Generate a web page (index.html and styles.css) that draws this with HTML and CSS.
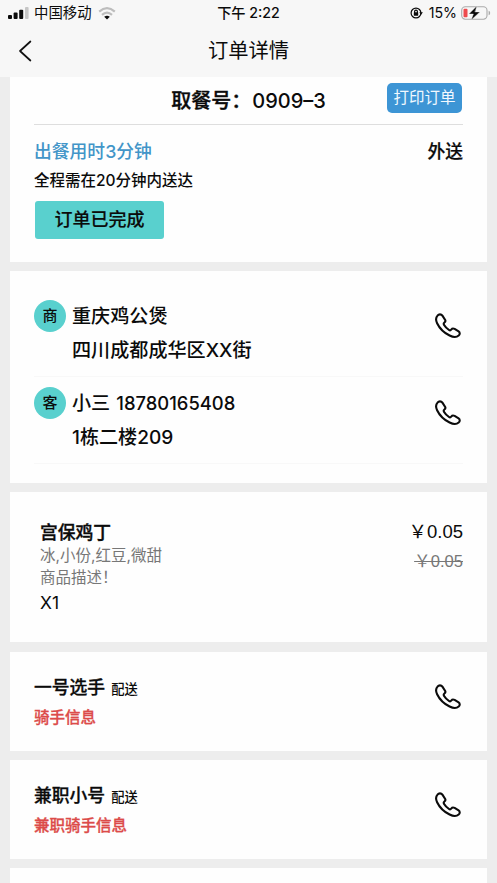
FILE: index.html
```html
<!DOCTYPE html>
<html lang="zh-CN">
<head>
<meta charset="utf-8">
<title>订单详情</title>
<link rel="stylesheet" href="styles.css">
</head>
<body>
<svg class="defs" aria-hidden="true">
  <symbol id="phone" viewBox="0 0 28 28">
    <path d="M3.5 3.6C4.8 2 7.2 2 8.4 3.6L11.2 8C11.7 9 11.3 9.8 10.4 10.5C9.5 11.2 9.5 12 10.1 13C11.3 15 13.1 16.7 15 18C15.9 18.6 16.6 18.5 17.3 17.5C18.1 16.4 19.4 16.3 20.6 16.9L24.6 19.4C26.2 20.5 26 22.4 24.7 23.5C22.4 25.5 19 25.2 15.6 23.5C10.1 20.8 5.6 16.4 3.1 11.2C1.7 8.3 1.9 5.4 3.5 3.6Z"/>
  </symbol>
</svg>
<header class="top">
  <div class="status">
    <div class="status-left">
      <svg class="signal" viewBox="0 0 21 12"><rect x="0" y="8" width="4" height="4" rx="1"/><rect x="5.6" y="5.6" width="4" height="6.4" rx="1"/><rect x="11.2" y="2.8" width="4" height="9.2" rx="1"/><rect class="dim" x="17" y="0" width="3.6" height="12" rx="1"/></svg>
      <span class="carrier">中国移动</span>
      <svg class="wifi" viewBox="0 0 18 13"><path d="M1.2 4.6Q9-2.2 16.8 4.6M4 7.8Q9 3.4 14 7.8"/><path class="dot" d="M6.2 9.8Q9 7.8 11.8 9.8L9 12.6Z"/></svg>
    </div>
    <div class="time">下午 2:22</div>
    <div class="status-right">
      <svg class="lock" viewBox="0 0 13 12"><circle cx="6" cy="6" r="4.9"/><path d="M4.6 5.5V4.6a1.4 1.4 0 0 1 2.8 0v.9"/><rect x="3.8" y="5.3" width="4.4" height="3.5" rx=".5"/><path class="tip" d="M9.3 5.2h3.6l-1.8 2.5Z"/></svg>
      <span class="pct">15%</span>
      <svg class="battery" viewBox="0 0 30 14"><rect class="case" x=".7" y=".8" width="25.3" height="12.4" rx="3.6"/><rect class="charge" x="2.5" y="2.7" width="4" height="8.6" rx="1"/><path class="nub" d="M27.6 4.8q1.6.5 1.6 2.2t-1.6 2.2Z"/><path class="bolt" d="M15.8 0 7.8 8h4.6L10.2 14 18.9 5.9h-4.7Z"/></svg>
    </div>
  </div>
  <nav class="nav">
    <svg class="back" viewBox="0 0 14 22"><path d="M12.4 1.5 2 11 12.4 20.5"/></svg>
    <h1 class="title">订单详情</h1>
  </nav>
</header>
<main class="cards">
  <section class="card order">
    <div class="order-head"><h2 class="pickup">取餐号：<span class="pickup-no">0909–3</span></h2><button class="print">打印订单</button></div>
    <div class="order-row"><span class="elapsed">出餐用时3分钟</span><span class="kind">外送</span></div>
    <p class="limit">全程需在20分钟内送达</p>
    <button class="done">订单已完成</button>
  </section>
  <section class="card contacts">
    <div class="contact">
      <span class="badge">商</span>
      <div class="lines"><div>重庆鸡公煲</div><div>四川成都成华区XX街</div></div>
      <svg class="phone"><use href="#phone"/></svg>
    </div>
    <div class="contact">
      <span class="badge">客</span>
      <div class="lines"><div>小三 <span class="digits">18780165408</span></div><div>1栋二楼209</div></div>
      <svg class="phone"><use href="#phone"/></svg>
    </div>
  </section>
  <section class="card product">
    <div class="info">
      <div class="dish">宫保鸡丁</div>
      <div class="desc">冰,小份,红豆,微甜</div>
      <div class="desc">商品描述！</div>
      <div class="qty">X1</div>
    </div>
    <div class="prices"><div class="price">￥0.05</div><div class="old">￥0.05</div></div>
  </section>
  <section class="card rider">
    <div><div class="rider-name">一号选手<small>配送</small></div><div class="rider-info">骑手信息</div></div>
    <svg class="phone"><use href="#phone"/></svg>
  </section>
  <section class="card rider">
    <div><div class="rider-name">兼职小号<small>配送</small></div><div class="rider-info">兼职骑手信息</div></div>
    <svg class="phone"><use href="#phone"/></svg>
  </section>
  <section class="card rest"></section>
</main>
</body>
</html>
```
FILE: styles.css
```css
* { box-sizing: border-box; margin: 0; padding: 0; }
html, body { height: 883px; overflow: hidden; }
body {
  display: flex; flex-direction: column;
  background: #ededed; color: #0b0b0b;
  font-family: Inter, "Noto Sans CJK SC", sans-serif;
  font-weight: 500;
}
svg { display: block; flex: none; fill: none; stroke-linecap: round; stroke-linejoin: round; }
button { border: 0; font: inherit; color: inherit; white-space: nowrap; }
.defs { position: absolute; width: 0; height: 0; }

.top { height: 77px; flex: none; background: #f7f7f7; }
.status { height: 26px; display: grid; grid-template-columns: 1fr auto 1fr; align-items: center; padding: 0 6px 0 8px; }
.status-left, .status-right { display: flex; align-items: center; }
.status-right { justify-content: flex-end; }
.signal { width: 21px; height: 12px; fill: #0b0b0b; }
.signal .dim { fill: #c6c6c6; }
.carrier { margin: 0 6px 0 5px; font-size: 14.4px; font-weight: 400; line-height: 26px; }
.wifi { width: 18px; height: 13px; stroke: #bdbdbd; stroke-width: 2.2; stroke-linecap: butt; }
.wifi .dot { fill: #0b0b0b; stroke: none; }
.time { font-size: 14.2px; line-height: 26px; padding-right: 2px; }
.lock { width: 13px; height: 12px; stroke: #0b0b0b; stroke-width: 1.2; }
.lock rect, .lock .tip { fill: #0b0b0b; stroke: none; }
.pct { margin: 0 4px 0 6px; font-size: 14.2px; font-weight: 400; line-height: 26px; }
.battery { width: 30px; height: 14px; }
.case { stroke: #aaa; stroke-width: 1.1; }
.charge { fill: #ee4b4e; }
.nub { fill: #aaa; }
.bolt { fill: #0b0b0b; stroke: #f7f7f7; stroke-width: .4; }
.nav { height: 49px; display: grid; grid-template-columns: 1fr auto 1fr; align-items: center; }
.back { width: 14px; height: 22px; margin-left: 18px; stroke: #111; stroke-width: 1.7; }
.title { font-size: 20.3px; font-weight: 400; line-height: 28px; }

.cards { display: flex; flex-direction: column; padding: 0 10px; }
.card { flex: none; background: #fefefe; margin-bottom: 9px; padding: 0 24px; }

.order { height: 185px; }
.order-head { height: 48px; border-bottom: 1px solid #dedede; display: grid; grid-template-columns: 1fr auto 1fr; align-items: center; }
.pickup { grid-column: 2; font-size: 20px; font-weight: 500; line-height: 28px; white-space: nowrap; -webkit-text-stroke: .35px; }
.pickup-no { margin-left: 1px; -webkit-text-stroke: 0; }
.print { justify-self: end; width: 75px; height: 30px; margin: 0 1px 6px 0; border-radius: 5px; background: #3d95d5; color: #f1f9ff; font-size: 15.5px; font-weight: 400; line-height: 30px; }
.order-row { height: 50px; display: flex; justify-content: space-between; align-items: center; font-size: 17.8px; }
.elapsed { color: #4295c8; }
.kind { -webkit-text-stroke: .2px; }
.limit { font-size: 15.5px; line-height: 22px; margin-top: -5px; }
.done { display: block; width: 129px; height: 38px; margin: 9px 0 0 1px; border-radius: 3px; background: #59d0ce; font-size: 18px; line-height: 38px; -webkit-text-stroke: .15px; }

.contacts { height: 212px; padding-top: 19px; }
.contact { height: 87px; display: flex; align-items: flex-start; border-bottom: 1px solid #f8f8f8; }
.badge { width: 32px; height: 32px; margin-top: 10px; border-radius: 50%; background: #59d0ce; font-size: 15px; line-height: 32px; text-align: center; }
.lines { flex: 1; margin: 9px 0 0 6px; font-size: 19.1px; line-height: 34px; }
.lines > div { height: 34px; white-space: nowrap; }
.digits { margin-left: 1px; font-size: 18.4px; }
.phone { width: 28px; height: 28px; stroke: #0b0b0b; stroke-width: 2.1; }
.contact .phone { margin: 22px 1px 0 0; }

.product { height: 150px; padding-left: 30px; display: flex; justify-content: space-between; margin-bottom: 10px; }
.info { padding-top: 29px; }
.dish { font-size: 17.8px; font-weight: 500; line-height: 24px; -webkit-text-stroke: .35px; }
.desc { font-size: 15.5px; font-weight: 400; line-height: 21.5px; color: #777; }
.qty { margin-top: 3px; font-size: 17.5px; font-weight: 400; line-height: 24px; }
.prices { padding-top: 28px; font-family: "Liberation Sans", "Noto Sans CJK SC", sans-serif; font-weight: 400; text-align: right; }
.price { font-size: 18.5px; line-height: 24px; }
.old { margin-top: 6px; font-size: 16.6px; line-height: 24px; color: #777; text-decoration: line-through; }

.rider { height: 99px; padding-top: 23px; display: flex; justify-content: space-between; }
.rider-name { font-size: 17.8px; line-height: 26px; -webkit-text-stroke: .3px; }
.rider-name small { margin-left: 6px; font-size: 13.3px; -webkit-text-stroke: 0; }
.rider-info { margin-top: 4px; font-size: 15.5px; line-height: 23px; color: #dc4b49; -webkit-text-stroke: .3px; }
.rider .phone { margin: 8px 1px 0 0; }
.rest { height: 40px; }
```
